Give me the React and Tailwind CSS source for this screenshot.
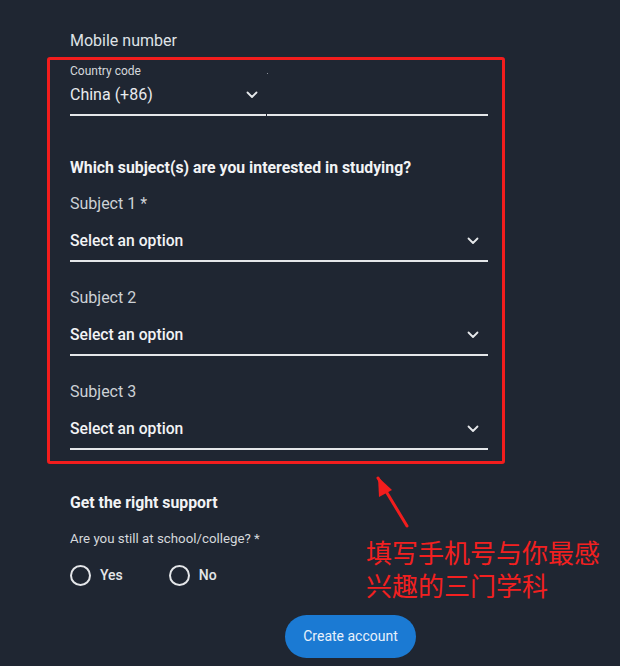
import React from "react";

const font = { fontFamily: "Roboto, 'Noto Sans', sans-serif" };

function Chevron({ className = "" }) {
  return (
    <svg width="12" height="8" viewBox="0 0 12 8" className={className}>
      <path d="M1.5 1.5 L6 6 L10.5 1.5" fill="none" stroke="#e6e8eb" strokeWidth="1.8" strokeLinecap="round" strokeLinejoin="round" />
    </svg>
  );
}

function SelectField({ label, mt }) {
  return (
    <div className={`flex flex-col ${mt}`}>
      <div className="text-[16px] leading-[24px] text-[#cdd1d6]">{label}</div>
      <div className="mt-[13px] flex items-center justify-between border-b-2 border-[#e4e6e9] pb-[7px]">
        <span className="text-[15.7px] leading-[24px] font-medium text-[#f2f3f5]">Select an option</span>
        <Chevron className="mr-[9px]" />
      </div>
    </div>
  );
}

function Radio({ label }) {
  return (
    <div className="flex items-center gap-[9px]">
      <div className="w-[21px] h-[21px] rounded-full border-2 border-[#e4e6e9]" />
      <span className="text-[14px] leading-[24px] font-medium text-[#e4e6e9]">{label}</span>
    </div>
  );
}

export default function App() {
  return (
    <div className="relative w-[620px] h-[666px] overflow-hidden bg-[#1f2632]" style={font}>
      <div className="flex flex-col w-[418px] ml-[70px] pt-[29px]">
        <div className="text-[16px] leading-[24px] text-[#dfe2e6]">Mobile number</div>
        <div className="flex mt-[10px]">
          <div className="flex flex-col w-[196px] border-b-2 border-[#e4e6e9] pb-[7px]">
            <div className="text-[12px] leading-[16px] text-[#d5d8dc]">Country code</div>
            <div className="mt-[4px] flex items-center justify-between">
              <span className="text-[16px] leading-[24px] text-[#e9ebee]">China (+86)</span>
              <Chevron className="mr-[8px]" />
            </div>
          </div>
          <div className="w-px" />
          <div className="flex-1 border-b-2 border-[#e4e6e9] relative">
            <div className="absolute left-0 top-[10px] w-px h-px bg-[#8a9099]" />
          </div>
        </div>

        <div className="mt-[41px] text-[15.8px] leading-[22px] font-bold text-[#f2f3f5]">
          Which subject(s) are you interested in studying?
        </div>
        <SelectField label="Subject 1 *" mt="mt-[13px]" />
        <SelectField label="Subject 2" mt="mt-[24px]" />
        <SelectField label="Subject 3" mt="mt-[24px]" />

        <div className="mt-[42px] text-[15.8px] leading-[22px] font-bold text-[#f2f3f5]">Get the right support</div>
        <div className="mt-[16px] text-[13.3px] leading-[18px] text-[#d5d8dc]">Are you still at school/college? *</div>
        <div className="mt-[15px] flex gap-[46px]">
          <Radio label="Yes" />
          <Radio label="No" />
        </div>
        <button className="mt-[28px] ml-[215px] w-[131px] h-[43px] rounded-full bg-[#1b7ad3] text-[14px] text-[#e8f1fb]">
          Create account
        </button>
      </div>

      {/* annotation overlay */}
      <div className="absolute left-[47px] top-[57px] w-[458px] h-[407px] border-[3px] border-[#f21d1d] rounded-[3px] pointer-events-none" />
      <svg className="absolute left-[360px] top-[470px]" width="60" height="65" viewBox="0 0 60 65">
        <path d="M18 8 L47 56" stroke="#f21d1d" strokeWidth="3" strokeLinecap="round" />
        <path d="M18 7 L19 27 L32 20 Z" fill="#f21d1d" />
      </svg>
      <div
        className="absolute left-[366px] top-[535px] text-[26px] leading-[33px] text-[#f22020]"
        style={{ fontFamily: "'Noto Sans CJK SC', sans-serif" }}
      >
        <div>填写手机号与你最感</div>
        <div>兴趣的三门学科</div>
      </div>
    </div>
  );
}
